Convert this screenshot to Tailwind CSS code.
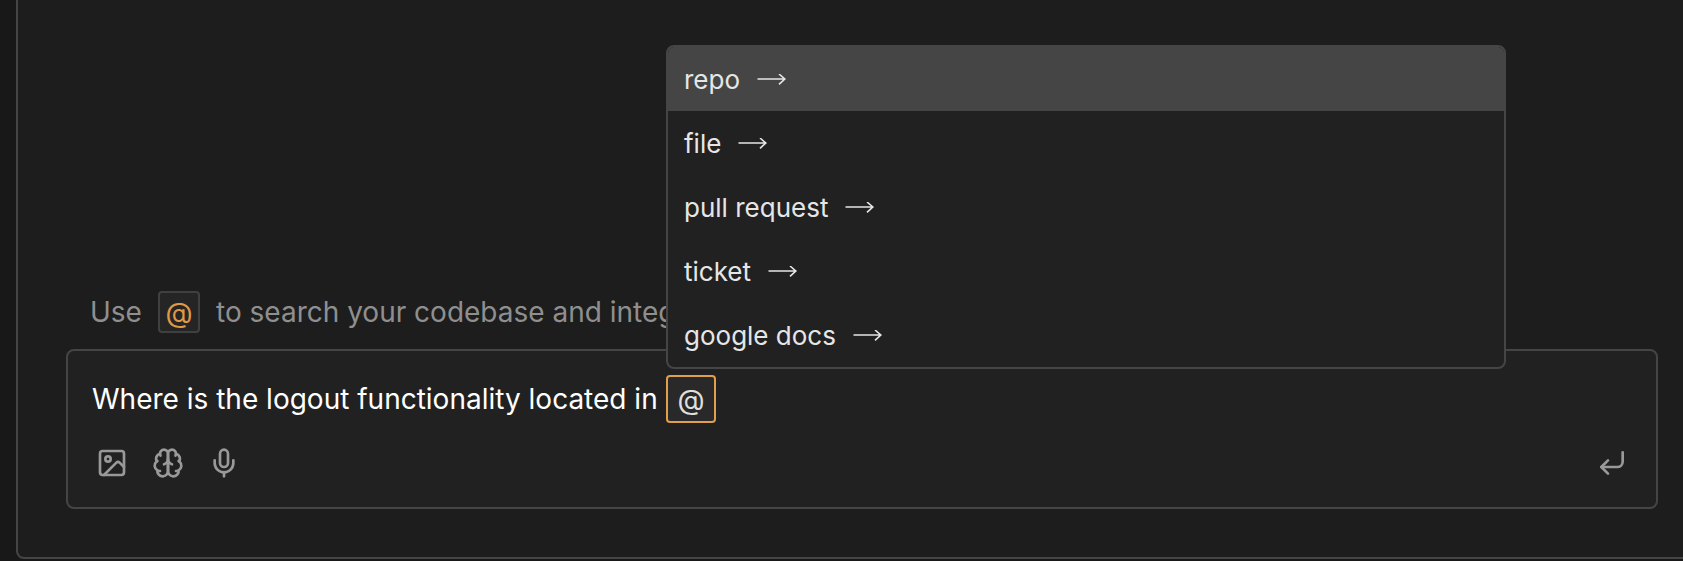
<!DOCTYPE html>
<html lang="en">
<head>
<meta charset="utf-8">
<title>Chat</title>
<script src="https://cdn.jsdelivr.net/npm/@tailwindcss/browser@4"></script>
</head>
<body class="h-[561px] w-[1683px] overflow-hidden bg-[#181818] pl-4 font-[Inter,sans-serif] text-[28px] leading-[32px]">
<main class="flex h-[559px] w-[1720px] flex-col rounded-bl-lg border-2 border-t-0 border-[#454545] bg-[#1d1d1d] pt-[291px] pl-12">
  <div class="flex h-[42px] items-center pl-6 whitespace-nowrap text-[#8f8f8f]">
    <span class="w-[68px]">Use</span>
    <span class="flex size-[42px] items-center justify-center rounded border-2 border-[#404040] bg-[#252525] pt-0.5 text-[#e09a44]">@</span>
    <span class="pl-4">to search your codebase and integrations</span>
  </div>
  <section class="mt-4 flex h-40 w-[1592px] flex-col rounded-lg border-2 border-[#454545] bg-[#212121] pt-6 pl-6">
    <div class="flex h-12 items-center text-white">
      <span class="w-[574px] whitespace-nowrap">Where is the logout functionality located in</span>
      <span class="relative flex h-12 w-[50px] items-center justify-center rounded border-2 border-[#e09f4c] bg-[#292929] pt-0.5 text-[#e0e0e0]">@
        <ul class="absolute -left-0.5 bottom-[52px] w-[840px] overflow-hidden rounded-lg border-2 border-[#454545] bg-[#212121] text-[26px] text-[#e6e6e6]">
          <li class="flex h-16 items-center gap-[17px] bg-[#454545] pt-0.5 pl-4">repo<svg class="h-3 w-[30px]" viewBox="0 0 30 12" fill="none" stroke="currentColor" stroke-width="1.6"><path d="M0.5 5H28M22 0L27.8 5L22 10.3"/></svg></li>
          <li class="flex h-16 items-center gap-[17px] pt-0.5 pl-4">file<svg class="h-3 w-[30px]" viewBox="0 0 30 12" fill="none" stroke="currentColor" stroke-width="1.6"><path d="M0.5 5H28M22 0L27.8 5L22 10.3"/></svg></li>
          <li class="flex h-16 items-center gap-[17px] pt-0.5 pl-4">pull request<svg class="h-3 w-[30px]" viewBox="0 0 30 12" fill="none" stroke="currentColor" stroke-width="1.6"><path d="M0.5 5H28M22 0L27.8 5L22 10.3"/></svg></li>
          <li class="flex h-16 items-center gap-[17px] pt-0.5 pl-4">ticket<svg class="h-3 w-[30px]" viewBox="0 0 30 12" fill="none" stroke="currentColor" stroke-width="1.6"><path d="M0.5 5H28M22 0L27.8 5L22 10.3"/></svg></li>
          <li class="flex h-16 items-center gap-[17px] pt-0.5 pl-4">google docs<svg class="h-3 w-[30px]" viewBox="0 0 30 12" fill="none" stroke="currentColor" stroke-width="1.6"><path d="M0.5 5H28M22 0L27.8 5L22 10.3"/></svg></li>
        </ul>
      </span>
    </div>
    <div class="mt-6 flex items-center gap-6 pr-[28px] pl-1 text-[#999999]">
      <svg class="size-8" viewBox="0 0 24 24" fill="none" stroke="currentColor" stroke-width="2" stroke-linecap="round" stroke-linejoin="round"><rect x="3" y="3" width="18" height="18" rx="2"/><circle cx="9" cy="9" r="2"/><path d="m21 15-3.086-3.086a2 2 0 0 0-2.828 0L6 21"/></svg>
      <svg class="size-8" viewBox="0 0 24 24" fill="none" stroke="currentColor" stroke-width="2" stroke-linecap="round" stroke-linejoin="round"><path d="M12 5a3 3 0 1 0-5.997.125 4 4 0 0 0-2.526 5.77 4 4 0 0 0 .556 6.588A4 4 0 1 0 12 18Z"/><path d="M12 5a3 3 0 1 1 5.997.125 4 4 0 0 1 2.526 5.77 4 4 0 0 1-.556 6.588A4 4 0 1 1 12 18Z"/><path d="M15 13a4.5 4.5 0 0 1-3-4 4.5 4.5 0 0 1-3 4"/><path d="M17.599 6.5a3 3 0 0 0 .399-1.375"/><path d="M6.003 5.125A3 3 0 0 0 6.401 6.5"/><path d="M3.477 10.896a4 4 0 0 1 .585-.396"/><path d="M19.938 10.5a4 4 0 0 1 .585.396"/><path d="M6 18a4 4 0 0 1-1.967-.516"/><path d="M19.967 17.484A4 4 0 0 1 18 18"/></svg>
      <svg class="size-8" viewBox="0 0 24 24" fill="none" stroke="currentColor" stroke-width="2" stroke-linecap="round" stroke-linejoin="round"><path d="M12 2a3 3 0 0 0-3 3v7a3 3 0 0 0 6 0V5a3 3 0 0 0-3-3Z"/><path d="M19 10v2a7 7 0 0 1-14 0v-2"/><path d="M12 19v3"/></svg>
      <svg class="ml-auto size-8" viewBox="0 0 24 24" fill="none" stroke="currentColor" stroke-width="2" stroke-linecap="round" stroke-linejoin="round"><path d="m9 10-5 5 5 5"/><path d="M20 4v7a4 4 0 0 1-4 4H4"/></svg>
    </div>
  </section>
</main>
</body>
</html>
